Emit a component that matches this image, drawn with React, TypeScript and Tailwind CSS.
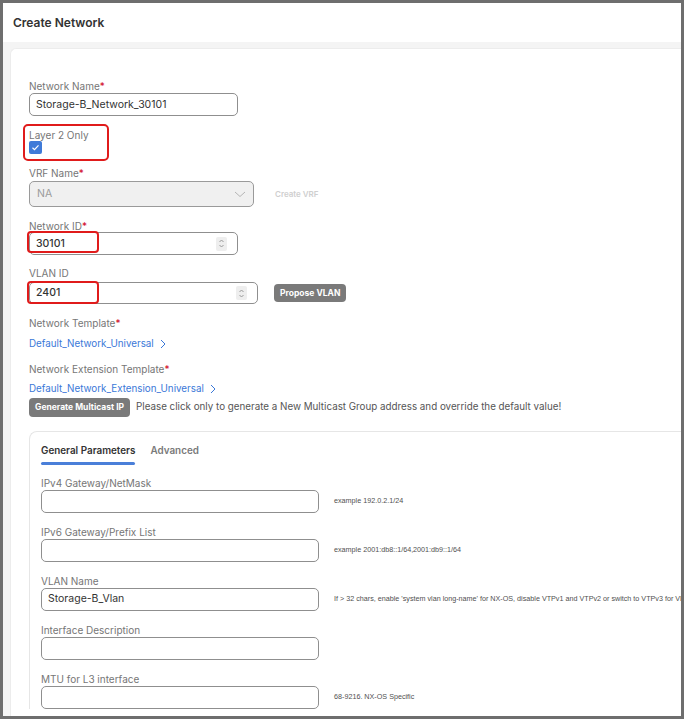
import React from "react";

const Label = ({ text, req }: { text: string; req?: boolean }) => (
  <div className="h-[14px] leading-[14px] text-[10px] text-[#767676] whitespace-nowrap">
    {text}
    {req && <span className="text-[#d0021b]">*</span>}
  </div>
);

const Spinner = () => (
  <div className="w-[11px] h-[14px] bg-[#eeeeee] rounded-[2px] flex items-center justify-center">
    <svg width="7" height="11" viewBox="0 0 7 11" fill="none" stroke="#9a9a9a" strokeWidth="1">
      <path d="M1.5 4 L3.5 2 L5.5 4" />
      <path d="M1.5 7 L3.5 9 L5.5 7" />
    </svg>
  </div>
);

const Input = ({ value, w }: { value?: string; w: string }) => (
  <div className={`${w} shrink-0 h-[23px] border-[1.5px] border-[#8f8f8f] rounded-[5px] flex items-center px-[6px] text-[10.5px] text-[#333]`}>
    {value}
  </div>
);

const Field = ({ label, value, hint }: { label: string; value?: string; hint?: string }) => (
  <div className="flex flex-col">
    <Label text={label} />
    <div className="flex items-center">
      <Input value={value} w="w-[278px]" />
      {hint && (
        <div className="ml-[15px] text-[7.2px] text-[#505050] whitespace-nowrap font-['Liberation_Sans',sans-serif]">
          {hint}
        </div>
      )}
    </div>
  </div>
);

const Chevron = () => (
  <svg width="6" height="10" viewBox="0 0 6 10" fill="none" stroke="#3a78d8" strokeWidth="1">
    <path d="M1 1 L5 5 L1 9" />
  </svg>
);

export default function App() {
  return (
    <div className="w-[685px] h-[720px] bg-white font-['Inter',sans-serif]">
      <div className="w-[684px] h-[719px] border-[3px] border-[#6e6e6e] overflow-hidden flex flex-col bg-white">
        <div className="h-[39px] shrink-0 flex items-center pl-[10px] text-[12px] font-semibold text-[#333]">
          Create Network
        </div>
        <div className="flex-1 bg-[#f4f4f4] pt-[6px] pl-[7px]">
          <div className="bg-white rounded-tl-[6px] border-l border-t border-[#ececec] h-full pl-[18px] pt-[30px]">
            {/* Network Name */}
            <Label text="Network Name" req />
            <div>
              <Input value="Storage-B_Network_30101" w="w-[209px]" />
            </div>

            {/* Layer 2 only */}
            <div className="relative mt-[12px]">
              <div className="absolute left-[-6px] top-[-4px] w-[86px] h-[37px] border-2 border-[#e01b1b] rounded-[5px]" />
              <Label text="Layer 2 Only" />
              <div className="w-[13px] h-[13px] mt-[-1px] rounded-[2px] bg-[#3f7ad8] flex items-center justify-center">
                <svg width="9" height="9" viewBox="0 0 9 9" fill="none" stroke="white" strokeWidth="1.2">
                  <path d="M1.5 4.8 L3.5 6.6 L7.5 2.4" />
                </svg>
              </div>
            </div>

            {/* VRF */}
            <div className="mt-[12px]">
              <Label text="VRF Name" req />
              <div className="flex items-center mt-[1px]">
                <div className="w-[225px] h-[26px] bg-[#f0f0f0] border-[1.5px] border-[#9a9a9a] rounded-[5px] flex items-center justify-between px-[7px] text-[10.5px] text-[#9b9b9b]">
                  <span>NA</span>
                  <svg width="12" height="8" viewBox="0 0 12 8" fill="none" stroke="#b5b5b5" strokeWidth="1">
                    <path d="M1 2 L6 6.5 L11 2" />
                  </svg>
                </div>
                <div className="ml-[21px] text-[8px] font-semibold text-[#cfcfcf]">Create VRF</div>
              </div>
            </div>

            {/* Network ID */}
            <div className="mt-[12px]">
              <Label text="Network ID" req />
              <div className="relative mt-[-1px]">
                <div className="absolute left-[-2px] top-[-1px] w-[72px] h-[22px] border-2 border-[#e01b1b] rounded-[4px]" />
                <div className="w-[209px] h-[23px] border-[1.5px] border-[#8f8f8f] rounded-[5px] flex items-center justify-between pl-[6px] pr-[10px] text-[10.5px] font-medium text-[#333]">
                  <span>30101</span>
                  <Spinner />
                </div>
              </div>
            </div>

            {/* VLAN ID */}
            <div className="mt-[11px]">
              <Label text="VLAN ID" />
              <div className="flex items-center mt-[2px]">
                <div className="relative">
                  <div className="absolute left-[-2px] top-[-1px] w-[72px] h-[23px] border-2 border-[#e01b1b] rounded-[4px]" />
                  <div className="w-[229px] h-[22px] border-[1.5px] border-[#8f8f8f] rounded-[5px] flex items-center justify-between pl-[6px] pr-[10px] text-[10.5px] font-medium text-[#333]">
                    <span>2401</span>
                    <Spinner />
                  </div>
                </div>
                <div className="ml-[16px] h-[18px] px-[6px] rounded-[4px] bg-[#7a7a7a] text-white text-[8.5px] font-bold flex items-center">
                  Propose VLAN
                </div>
              </div>
            </div>

            {/* Network Template */}
            <div className="mt-[12px]">
              <Label text="Network Template" req />
              <div className="mt-[7px] h-[14px] leading-[14px] text-[9.8px] text-[#3a78d8] flex items-center gap-[6px]">
                Default_Network_Universal
                <Chevron />
              </div>
            </div>

            <div className="mt-[11px]">
              <Label text="Network Extension Template" req />
              <div className="mt-[6px] h-[14px] leading-[14px] text-[9.8px] text-[#3a78d8] flex items-center gap-[6px]">
                Default_Network_Extension_Universal
                <Chevron />
              </div>
            </div>

            <div className="mt-[2px] flex items-center">
              <div className="h-[19px] px-[6px] rounded-[4px] bg-[#7a7a7a] text-white text-[8.5px] font-bold flex items-center whitespace-nowrap">
                Generate Multicast IP
              </div>
              <div className="ml-[6px] text-[9.8px] text-[#555] whitespace-nowrap">
                Please click only to generate a New Multicast Group address and override the default value!
              </div>
            </div>

            {/* Tab card */}
            <div className="mt-[14px] border-l border-t border-[#e6e6e6] rounded-tl-[8px] pl-[11px] pt-[11px]">
              <div className="flex items-start gap-[15px] text-[9.9px]">
                <div className="flex flex-col">
                  <div className="h-[14px] leading-[14px] font-semibold text-[#333] whitespace-nowrap">General Parameters</div>
                  <div className="mt-[5px] h-[2.5px] bg-[#4a7fd9] rounded-full" />
                </div>
                <div className="h-[14px] leading-[14px] font-semibold text-[#7a7a7a]">Advanced</div>
              </div>
              <div className="mt-[11px] flex flex-col gap-[12px]">
                <Field label="IPv4 Gateway/NetMask" hint="example 192.0.2.1/24" />
                <Field label="IPv6 Gateway/Prefix List" hint="example 2001:db8::1/64,2001:db9::1/64" />
                <Field
                  label="VLAN Name"
                  value="Storage-B_Vlan"
                  hint="If > 32 chars, enable 'system vlan long-name' for NX-OS, disable VTPv1 and VTPv2 or switch to VTPv3 for VLAN IDs > 1005"
                />
                <Field label="Interface Description" />
                <Field label="MTU for L3 interface" hint="68-9216. NX-OS Specific" />
              </div>
            </div>
          </div>
        </div>
      </div>
    </div>
  );
}
